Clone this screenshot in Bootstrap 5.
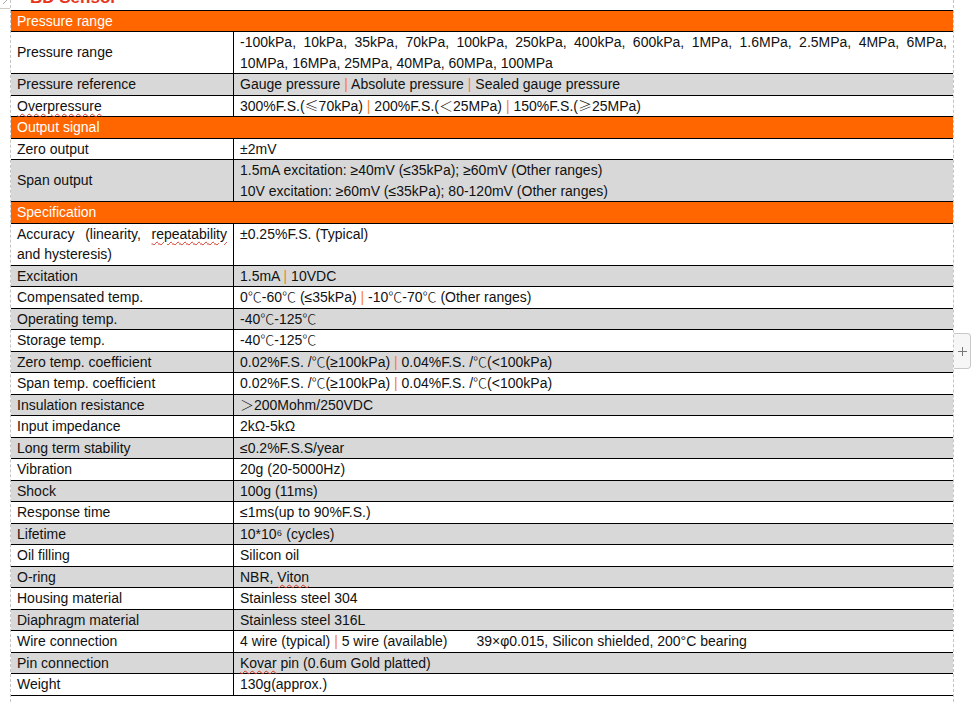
<!DOCTYPE html>
<html lang="en">
<head>
<meta charset="utf-8">
<title>Pressure sensor specification</title>
<link href="https://cdn.jsdelivr.net/npm/bootstrap@5.3.0/dist/css/bootstrap.min.css" rel="stylesheet">
<style>
html,body{height:100%;overflow:hidden;background:#fff}
body{font-family:"Liberation Sans",Arial,sans-serif;font-size:14px;color:#111;position:relative}
.sheet{padding-left:11px;width:954px}
.logo-strip{height:9.5px;overflow:hidden;padding-left:19px}
.logo-word{display:block;color:#e8341c;font-weight:700;font-size:17px;line-height:17px;margin-top:-11px}
.spec-table{table-layout:fixed;width:942px;border-collapse:collapse;margin:0;border-top:1px solid #000}
.col-a{width:222.5px}
.spec-table td{border:0;border-top:1px solid #000;border-bottom:1px solid #000;padding:0 6px;vertical-align:middle;line-height:20.5px;height:21.5px;background:#fff;color:#111;box-shadow:none;white-space:normal}
.spec-table td:first-child{border-right:1px solid #000}
.spec-table tr.alt td{background:#d8d8d8}
.spec-table tr.band td{background:#ff6600;color:#fff;border-right:0}
.spec-table td.just{text-align:justify;vertical-align:top}
.pipe{color:#f58220}
.cj{font-family:"Noto Sans CJK SC","Liberation Sans",sans-serif;font-weight:300;line-height:1}
.sq{text-decoration:underline wavy #d8321e 1px;text-underline-offset:2px}
.wire-gap{display:inline-block;width:29px}
.guide-l,.guide-r{position:absolute;top:0;bottom:0;width:0;border-left:1px dashed #c4c4c4}
.guide-l{left:10px}
.guide-r{left:953px}
.crop-h{position:absolute;left:0;top:8px;width:10px;border-top:1px solid #ccc}
.add-tab{position:absolute;left:954px;top:333px;width:17px;height:36px;border:1px solid #c8c8c8;border-left:0;border-radius:0 4px 4px 0;background:#f6f6f6;color:#777;display:flex;align-items:center;justify-content:center}
.grip{position:absolute;left:3px;top:0}
</style>
</head>
<body>
<div class="sheet">
  <div class="logo-strip"><span class="logo-word">BD Sensor</span></div>
  <table class="table spec-table">
    <colgroup><col class="col-a"><col></colgroup>
    <tbody>
      <tr class="band"><td colspan="2">Pressure range</td></tr>
      <tr><td>Pressure range</td><td class="just">-100kPa, 10kPa, 35kPa, 70kPa, 100kPa, 250kPa, 400kPa, 600kPa, 1MPa, 1.6MPa, 2.5MPa, 4MPa, 6MPa, 10MPa, 16MPa, 25MPa, 40MPa, 60MPa, 100MPa</td></tr>
      <tr class="alt"><td>Pressure reference</td><td>Gauge pressure <span class="pipe">|</span> Absolute pressure <span class="pipe">|</span> Sealed gauge pressure</td></tr>
      <tr><td><span class="sq">Overpressure</span></td><td>300%F.S.(<span class="cj">≤</span>70kPa) <span class="pipe">|</span> 200%F.S.(<span class="cj">＜</span>25MPa) <span class="pipe">|</span> 150%F.S.(<span class="cj">≥</span>25MPa)</td></tr>
      <tr class="band"><td colspan="2">Output signal</td></tr>
      <tr><td>Zero output</td><td>±2mV</td></tr>
      <tr class="alt"><td>Span output</td><td>1.5mA excitation: ≥40mV (≤35kPa); ≥60mV (Other ranges)<br>10V excitation: ≥60mV (≤35kPa); 80-120mV (Other ranges)</td></tr>
      <tr class="band"><td colspan="2">Specification</td></tr>
      <tr><td class="just">Accuracy (linearity, <span class="sq">repeatability</span> and hysteresis)</td><td class="just">±0.25%F.S. (Typical)</td></tr>
      <tr class="alt"><td>Excitation</td><td>1.5mA <span class="pipe">|</span> 10VDC</td></tr>
      <tr><td>Compensated temp.</td><td>0<span class="cj">℃</span>-60<span class="cj">℃</span> (≤35kPa) <span class="pipe">|</span> -10<span class="cj">℃</span>-70<span class="cj">℃</span> (Other ranges)</td></tr>
      <tr class="alt"><td>Operating temp.</td><td>-40<span class="cj">℃</span>-125<span class="cj">℃</span></td></tr>
      <tr><td>Storage temp.</td><td>-40<span class="cj">℃</span>-125<span class="cj">℃</span></td></tr>
      <tr class="alt"><td>Zero temp. coefficient</td><td>0.02%F.S. /<span class="cj">℃</span>(≥100kPa) <span class="pipe">|</span> 0.04%F.S. /<span class="cj">℃</span>(&lt;100kPa)</td></tr>
      <tr><td>Span temp. coefficient</td><td>0.02%F.S. /<span class="cj">℃</span>(≥100kPa) <span class="pipe">|</span> 0.04%F.S. /<span class="cj">℃</span>(&lt;100kPa)</td></tr>
      <tr class="alt"><td>Insulation resistance</td><td><span class="cj">＞</span>200Mohm/250VDC</td></tr>
      <tr><td>Input impedance</td><td>2kΩ-5kΩ</td></tr>
      <tr class="alt"><td>Long term stability</td><td>≤0.2%F.S.S/year</td></tr>
      <tr><td>Vibration</td><td>20g (20-5000Hz)</td></tr>
      <tr class="alt"><td>Shock</td><td>100g (11ms)</td></tr>
      <tr><td>Response time</td><td>≤1ms(up to 90%F.S.)</td></tr>
      <tr class="alt"><td>Lifetime</td><td>10*10⁶ (cycles)</td></tr>
      <tr><td>Oil filling</td><td>Silicon oil</td></tr>
      <tr class="alt"><td>O-ring</td><td>NBR, <span class="sq">Viton</span></td></tr>
      <tr><td>Housing material</td><td>Stainless steel 304</td></tr>
      <tr class="alt"><td>Diaphragm material</td><td>Stainless steel 316L</td></tr>
      <tr><td>Wire connection</td><td>4 wire (typical) <span class="pipe">|</span> 5 wire (available)<span class="wire-gap"></span>39×φ0.015, Silicon shielded, 200°C bearing</td></tr>
      <tr class="alt"><td>Pin connection</td><td><span class="sq">Kovar</span> pin (0.6um Gold platted)</td></tr>
      <tr><td>Weight</td><td>130g(approx.)</td></tr>
    </tbody>
  </table>
</div>
<div class="guide-l"></div>
<div class="guide-r"></div>
<div class="crop-h"></div>
<svg class="grip" width="6" height="4" viewBox="0 0 6 4"><path d="M0 4 4 0" stroke="#aaa" fill="none"/></svg>
<div class="add-tab"><svg width="11" height="11" viewBox="0 0 11 11"><path d="M5.5 1v9M1 5.5h9" stroke="#777" stroke-width="1" fill="none"/></svg></div>
<script src="https://cdn.jsdelivr.net/npm/bootstrap@5.3.0/dist/js/bootstrap.bundle.min.js"></script>
</body>
</html>
